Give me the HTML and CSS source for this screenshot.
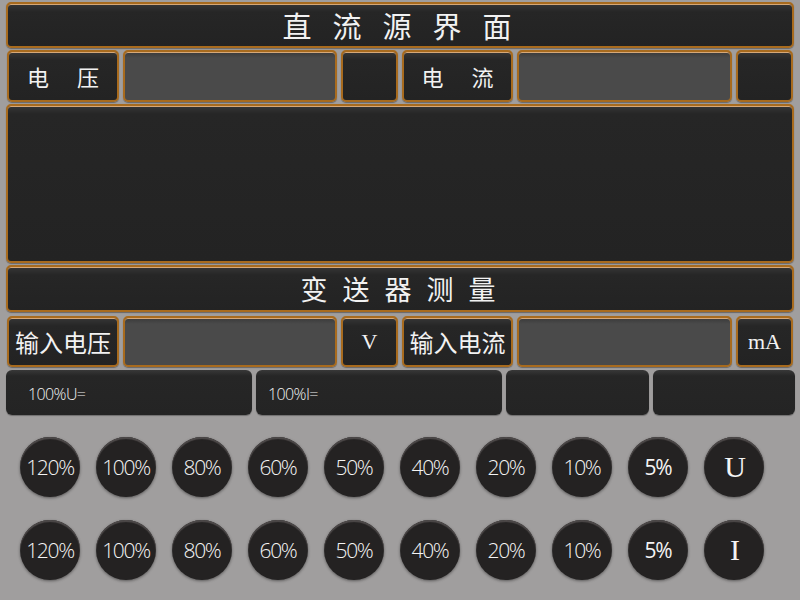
FILE: index.html
```html
<!DOCTYPE html>
<html lang="zh">
<head>
<meta charset="utf-8">
<title>直流源界面</title>
<link rel="stylesheet" href="styles.css">
</head>
<body>
<div class="screen">
  <div class="panel title"><span class="spaced-lg">直流源界面</span></div>
  <div class="row row-top">
    <div class="panel label"><span class="spaced-md">电压</span></div>
    <div class="panel field"></div>
    <div class="panel unit"></div>
    <div class="panel label"><span class="spaced-md">电流</span></div>
    <div class="panel field"></div>
    <div class="panel unit"></div>
  </div>
  <div class="panel display"></div>
  <div class="panel subtitle"><span class="spaced-sm">变送器测量</span></div>
  <div class="row row-mid">
    <div class="panel label wide">输入电压</div>
    <div class="panel field"></div>
    <div class="panel unit serif">V</div>
    <div class="panel label wide">输入电流</div>
    <div class="panel field"></div>
    <div class="panel unit serif">mA</div>
  </div>
  <div class="info-row">
    <div class="info">100%U=</div>
    <div class="info">100%I=</div>
    <div class="info"></div>
    <div class="info"></div>
  </div>
  <div class="buttons">
    <div class="btn">120%</div>
    <div class="btn">100%</div>
    <div class="btn">80%</div>
    <div class="btn">60%</div>
    <div class="btn">50%</div>
    <div class="btn">40%</div>
    <div class="btn">20%</div>
    <div class="btn">10%</div>
    <div class="btn bold">5%</div>
    <div class="btn letter">U</div>
    <div class="btn">120%</div>
    <div class="btn">100%</div>
    <div class="btn">80%</div>
    <div class="btn">60%</div>
    <div class="btn">50%</div>
    <div class="btn">40%</div>
    <div class="btn">20%</div>
    <div class="btn">10%</div>
    <div class="btn bold">5%</div>
    <div class="btn letter">I</div>
  </div>
</div>
</body>
</html>
```
FILE: styles.css
```css
html, body {
  margin: 0;
  padding: 0;
}
body {
  width: 800px;
  height: 600px;
  overflow: hidden;
  background: #a09e9e;
  font-family: "Noto Sans CJK SC", "Noto Sans", sans-serif;
  color: #f2f2f2;
}
.screen {
  display: flex;
  flex-direction: column;
  padding: 2px 6px 0 6px;
}
.panel {
  box-sizing: border-box;
  border: 2px solid #a86b1e;
  border-radius: 5px;
  background: linear-gradient(#363636 0px, #262626 8px, #232323 100%);
  box-shadow: inset 0 1px 0 #d6a878, 0 1px 1px rgba(0,0,0,0.35);
  display: flex;
  align-items: center;
  justify-content: center;
  white-space: nowrap;
}
.title {
  height: 46px;
  font-size: 29px;
}
.spaced-lg { letter-spacing: 21px; margin-right: -21px; margin-left: -6px; }
.spaced-md { letter-spacing: 28px; margin-right: -28px; }
.spaced-sm { letter-spacing: 15px; margin-right: -15px; margin-left: -4px; }
.row {
  display: grid;
  grid-template-columns: 112px 214px 57px 111px 215px 57px;
  column-gap: 4px;
  padding-left: 1px;
}
.row-top {
  margin-top: 2px;
  height: 52px;
}
.row-mid {
  margin-top: 4px;
  height: 51px;
}
.label {
  font-size: 22px;
}
.label.wide {
  font-size: 24px;
  letter-spacing: 0;
}
.field {
  background: linear-gradient(#3a3a3a 0px, #4a4a4a 6px, #4a4a4a 100%);
}
.unit.serif {
  font-family: "Liberation Serif", "DejaVu Serif", serif;
  font-size: 22px;
}
.display {
  margin-top: 2px;
  height: 159px;
}
.subtitle {
  margin-top: 2px;
  height: 47px;
  font-size: 27px;
}
.info-row {
  margin-top: 3px;
  display: grid;
  grid-template-columns: 246px 246px 143px 142px;
  column-gap: 4px;
  height: 45px;
}
.info {
  background: linear-gradient(#383838 0px, #262626 6px, #242424 100%);
  border-radius: 6px;
  box-shadow: 0 1px 1px rgba(0,0,0,0.3);
  font-family: "Open Sans", "Noto Sans", sans-serif;
  font-weight: 300;
  font-size: 16px;
  letter-spacing: -0.6px;
  display: flex;
  align-items: center;
  padding-left: 22px;
  padding-top: 2px;
  box-sizing: border-box;
}
.info + .info {
  padding-left: 12px;
}
.buttons {
  margin-top: 22px;
  padding-left: 14px;
  display: grid;
  grid-template-columns: repeat(10, 60px);
  column-gap: 16px;
  row-gap: 23px;
}
.btn {
  width: 60px;
  height: 60px;
  border-radius: 50%;
  background: #242222;
  box-shadow: inset 0 2px 1px #4e4a4a, 0 1px 3px rgba(0,0,0,0.45);
  display: flex;
  align-items: center;
  justify-content: center;
  font-family: "Open Sans", "Noto Sans", sans-serif;
  font-weight: 300;
  font-size: 21px;
  letter-spacing: -1.3px;
  color: #f4f4f4;
}
.btn.bold {
  font-weight: 400;
}
.btn.letter {
  font-family: "Liberation Serif", "DejaVu Serif", serif;
  font-size: 30px;
  letter-spacing: 0;
  font-weight: 400;
  padding-left: 2px;
  box-sizing: border-box;
}
```
